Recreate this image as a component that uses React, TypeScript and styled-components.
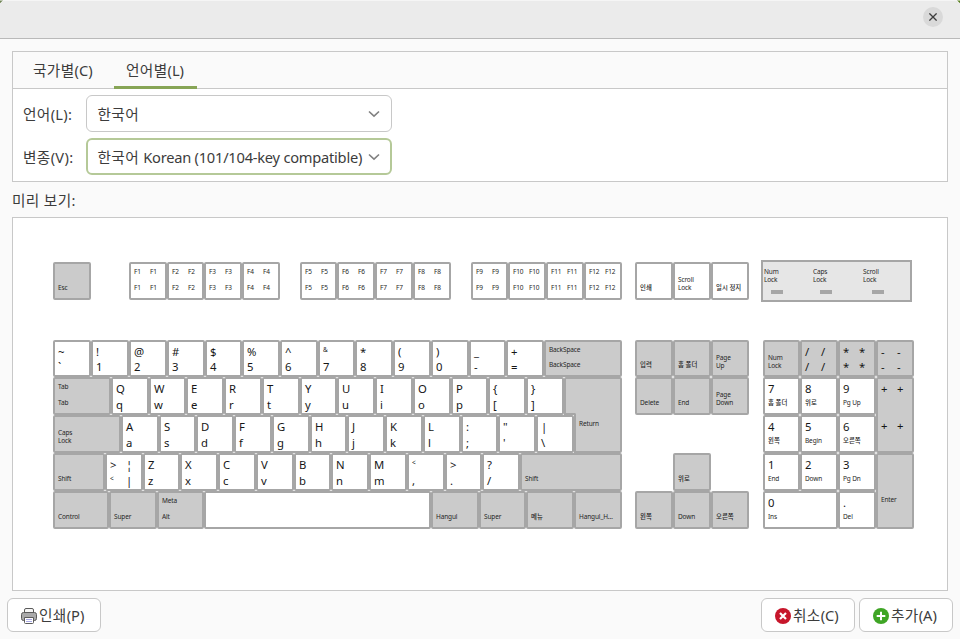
import React from "react";
import styled, { createGlobalStyle, css } from "styled-components";

const GlobalStyle = createGlobalStyle`
  *, *::before { box-sizing: border-box; }
  body {
    margin: 0;
    background: #fafafa;
    color: #3c3c3c;
    font-family: "Noto Sans", "Noto Sans CJK KR", sans-serif;
    font-size: 14.67px;
    letter-spacing: 0.35px;
  }
`;

/* ---------- window ---------- */

const Dialog = styled.div`
  width: 960px;
  height: 639px;
  display: flex;
  flex-direction: column;
  overflow: hidden;
  background: #fafafa;
`;

const TitleBar = styled.header`
  flex: none;
  height: 39px;
  display: flex;
  justify-content: flex-end;
  align-items: flex-start;
  padding: 6px 17px 0 0;
  background: linear-gradient(135deg, #6f8554 2px, transparent 2.5px),
    linear-gradient(225deg, #5a8020 2px, transparent 2.5px), #ebebeb;
  background-origin: border-box;
  border-top: 1px solid rgba(255, 255, 255, 0.5);
  border-bottom: 1px solid #b9b9b9;
`;

const CloseButton = styled.button`
  width: 20px;
  height: 20px;
  padding: 0;
  border: 0;
  border-radius: 50%;
  background: #d9d9d9;
  display: flex;
  align-items: center;
  justify-content: center;
`;

const Body = styled.main`
  flex: 1;
  padding: 12px 12px 0;
  display: flex;
  flex-direction: column;
`;

/* ---------- notebook ---------- */

const Notebook = styled.section`
  flex: none;
  height: 131px;
  border: 1px solid #c8c8c8;
  background: #fff;
`;

const TabBar = styled.nav`
  height: 37px;
  display: flex;
  background: #fafafa;
  border-bottom: 1px solid #c8c8c8;
  padding-left: 8px;
`;

const Tab = styled.div<{ $active?: boolean; $width: number }>`
  width: ${(p) => p.$width}px;
  height: 37px;
  line-height: 37px;
  padding-left: 12px;
  white-space: nowrap;
  border-bottom: 3px solid ${(p) => (p.$active ? "#87a556" : "transparent")};
`;

const Latin = styled.span<{ $spacing?: number }>`
  letter-spacing: ${(p) => p.$spacing ?? 0}px;
`;

const Form = styled.div`
  padding: 6px 10px;
  display: grid;
  grid-template-columns: 63px 306px;
  grid-auto-rows: 37px;
  row-gap: 6px;
  align-items: center;
`;

const FieldLabel = styled.label`
  white-space: nowrap;
`;

const Select = styled.div<{ $focused?: boolean }>`
  height: 37px;
  display: flex;
  align-items: center;
  justify-content: space-between;
  white-space: nowrap;
  background: #fff;
  border-radius: 6px;
  ${(p) =>
    p.$focused
      ? css`
          border: 2px solid #b5c998;
          padding: 0 10px 0 9.5px;
        `
      : css`
          border: 1px solid #c8c8c8;
          padding: 0 11px 0 10.5px;
        `}
`;

const PreviewLabel = styled.div`
  height: 35px;
  line-height: 36px;
`;

/* ---------- keyboard ---------- */

const Preview = styled.section`
  height: 374px;
  border: 1px solid #c8c8c8;
  background: #fff;
  padding: 42px 0 0 40px;
  color: #262626;
  line-height: 12px;
  letter-spacing: 0;
`;

const FunctionRow = styled.div`
  height: 42px;
  display: flex;
  align-items: center;
  margin-bottom: 38px;
`;

const KeyGroup = styled.div<{ $gap: number }>`
  display: flex;
  margin-right: ${(p) => p.$gap}px;
`;

const Blocks = styled.div`
  display: flex;
`;

const Block = styled.div<{ $width: number; $gap: number }>`
  width: ${(p) => p.$width}px;
  margin-right: ${(p) => p.$gap}px;
`;

const KeyRow = styled.div`
  display: flex;
`;

const Cap = styled.div<{ $w: number; $h: number; $dark?: boolean }>`
  flex: none;
  width: ${(p) => p.$w}px;
  height: ${(p) => p.$h}px;
  border: 2px solid #a6a6a6;
  border-radius: 2px;
  background: ${(p) => (p.$dark ? "#cbcbcb" : "#fff")};
  display: grid;
  grid-template-columns: 16px 1fr;
  grid-template-rows: ${(p) => (p.$h > 38 ? 37 : p.$h === 37 ? 15 : 16)}px 1fr;
  padding: 2px 0 0 3px;
  white-space: nowrap;
  overflow: hidden;
`;

const Legend = styled.span<{ $small?: boolean; $korean?: boolean; $lower?: boolean; $wide?: boolean }>`
  ${(p) =>
    p.$small
      ? css`
          font-size: 6.5px;
          line-height: 12px;
          letter-spacing: -0.13px;
        `
      : css`
          font-size: 11.3px;
          line-height: 16px;
          color: #161616;
        `}
  ${(p) => p.$korean && "font-size: 6.4px; font-weight: 500; letter-spacing: 0;"}
  ${(p) => p.$wide && "grid-column: 1 / 3;"}
  ${(p) => p.$lower && "grid-row: 2;"}
`;

const TwoLine = styled.span`
  grid-column: 1 / 3;
  grid-row: 1 / 3;
  padding-top: 10px;
  font-size: 6.5px;
  line-height: 7.6px;
  letter-spacing: -0.13px;
  white-space: pre;
`;

const ReturnArea = styled.div`
  display: grid;
  grid-template-columns: 511px 10px 48px;
  grid-template-rows: 38px 38px;
`;

const UpperLetters = styled(KeyRow)`
  grid-area: 1 / 1 / 2 / 2;
`;

const LowerLetters = styled(KeyRow)`
  grid-area: 2 / 1 / 3 / 3;
  z-index: 1;
`;

/* Return key with its lower left corner notched out */
const ReturnKey = styled.div`
  grid-area: 1 / 2 / 3 / 4;
  position: relative;
  border: 2px solid #a6a6a6;
  border-radius: 2px;
  background: #cbcbcb;
  padding: 39px 0 0 13px;
  font-size: 6.5px;
  letter-spacing: -0.13px;

  &::before {
    content: "";
    position: absolute;
    left: -2px;
    top: 34px;
    width: 12px;
    height: 40px;
    background: #fff;
    border: solid #a6a6a6;
    border-width: 2px 2px 0 0;
    border-top-right-radius: 2px;
  }
`;

const Spacer = styled.div<{ $w?: number; $h?: number }>`
  flex: none;
  width: ${(p) => p.$w ?? 1}px;
  height: ${(p) => p.$h ?? 1}px;
`;

const NumBody = styled.div`
  display: grid;
  grid-template-columns: 113px 38px;
`;

const StatusPanel = styled.div`
  width: 151px;
  height: 42px;
  border: 2px solid #a6a6a6;
  background: #e6e6e6;
  display: grid;
  grid-template-columns: 49px 50px 48px;
  padding: 6px 0 0 1px;
  font-size: 6.5px;
  line-height: 7.6px;
  letter-spacing: -0.13px;
  white-space: pre;
`;

const Led = styled.i<{ $indent: number }>`
  display: block;
  width: 12px;
  height: 4px;
  margin: 6.8px 0 0 ${(p) => p.$indent}px;
  background: #a6a6a6;
`;

/* ---------- actions ---------- */

const Actions = styled.footer`
  flex: none;
  height: 48px;
  padding: 7px 7px 7px 7px;
  display: flex;
  gap: 4px;
`;

const Push = styled.button<{ $end?: boolean }>`
  width: 94px;
  height: 34px;
  padding: 0 0 0 13px;
  margin-left: ${(p) => (p.$end ? "auto" : 0)};
  display: flex;
  align-items: center;
  gap: 2px;
  border: 1px solid #c8c8c8;
  border-radius: 6px;
  background: #fff;
  color: inherit;
  font: inherit;
  letter-spacing: inherit;
  line-height: 20px;
  white-space: nowrap;

  span {
    padding-bottom: 1px;
  }

  svg {
    margin-top: 1px;
  }
`;

const Chevron = () => (
  <svg width="12" height="8" viewBox="0 0 12 8" fill="none" stroke="#808080" strokeWidth="1.6">
    <path d="M1 1.5 6 6.2 11 1.5" />
  </svg>
);

const CloseGlyph = () => (
  <svg width="8" height="8" viewBox="0 0 8 8" stroke="#3c3c3c" strokeWidth="1.3">
    <path d="M.4.4 7.6 7.6M7.6.4.4 7.6" />
  </svg>
);

const PrinterIcon = () => (
  <svg width="16" height="16" viewBox="0 0 16 16" stroke="#5a5a5a">
    <rect x="3.5" y=".5" width="9" height="7" rx="1.5" fill="#f6f6f6" />
    <rect x=".5" y="4.5" width="15" height="8" rx="2" fill="#a9a9a9" />
    <path d="M3.5 9.5h9v5a1 1 0 0 1-1 1h-7a1 1 0 0 1-1-1z" fill="#fff" />
    <path d="M5 11.5h6M5 13.5h6" stroke="#a9a9e6" />
  </svg>
);

const CancelIcon = () => (
  <svg width="16" height="16" viewBox="0 0 16 16">
    <circle cx="8" cy="8" r="8" fill="#c7162b" />
    <path d="M5 5l6 6M11 5l-6 6" stroke="#fff" strokeWidth="2.2" />
  </svg>
);

const AddIcon = () => (
  <svg width="16" height="16" viewBox="0 0 16 16">
    <circle cx="8" cy="8" r="8" fill="#3fa525" />
    <path d="M8 3.7v8.6M3.7 8h8.6" stroke="#fff" strokeWidth="2" />
  </svg>
);

/* ---------- key data ---------- */

type KeyDef = {
  w: number;
  h?: number;
  dark?: boolean;
  two?: string;
  tl?: string;
  tr?: string;
  bl?: string;
  br?: string;
};

const isWord = (t: string) => t.length > 1;
const isKorean = (t: string) => /[가-힣]/.test(t);

/* A legend prefixed with "~~" is a single character set in the small size. */
function Text({ t, lower, wide }: { t?: string; lower?: boolean; wide?: boolean }) {
  if (!t) return lower ? null : <span />;
  const tiny = t.startsWith("~~");
  const label = tiny ? t.slice(2) : t;
  return (
    <Legend $small={tiny || isWord(t)} $korean={isKorean(t)} $lower={lower} $wide={wide}>
      {label}
    </Legend>
  );
}

function Key({ w, h = 38, dark, two, tl, tr, bl, br }: KeyDef) {
  return (
    <Cap $w={w} $h={h} $dark={dark}>
      {two ? (
        <TwoLine>{two}</TwoLine>
      ) : (
        <>
          <Text t={tl} wide={!tr} />
          {tr && <Text t={tr} />}
          <Text t={bl} lower wide={!br} />
          {br && <Text t={br} lower />}
        </>
      )}
    </Cap>
  );
}

const Keys = ({ list, h }: { list: KeyDef[]; h?: number }) => (
  <>
    {list.map((k, i) => (
      <Key key={i} h={h} {...k} />
    ))}
  </>
);

const pairs = (text: string, widths: number[]): KeyDef[] =>
  text.split(" ").map((p, i) => ({ w: widths[i], tl: p[0], bl: p[1] }));

const fkeys = (first: number, widths: number[]): KeyDef[] =>
  widths.map((w, i) => {
    const t = `F${first + i}`;
    return { w, tl: t, tr: t, bl: t, br: t };
  });

const digits: KeyDef[] = [
  ...pairs("~` !1 @2 #3 $4 %5 ^6", [38, 38, 38, 38, 37, 38, 38]),
  { w: 37, tl: "~~&", bl: "7" },
  ...pairs("*8 (9 )0 _- +=", [38, 38, 38, 37, 38]),
  { w: 78, dark: true, tl: "BackSpace", bl: "BackSpace" },
];

const upper: KeyDef[] = [
  { w: 58, dark: true, tl: "Tab", bl: "Tab" },
  ...pairs("Qq Ww Ee Rr Tt Yy Uu Ii Oo Pp {[ }]", [38, 37, 38, 38, 38, 37, 38, 38, 38, 37, 38, 38]),
];

const home: KeyDef[] = [
  { w: 68, dark: true, two: "Caps\nLock" },
  ...pairs("Aa Ss Dd Ff Gg Hh Jj Kk Ll :; \"' |\\", [38, 37, 38, 38, 38, 37, 38, 38, 38, 37, 38, 38]),
];

const lower: KeyDef[] = [
  { w: 52, dark: true, bl: "Shift" },
  { w: 38, tl: ">", tr: "¦", bl: "~~<", br: "|" },
  ...pairs("Zz Xx Cc Vv Bb Nn Mm", [37, 38, 38, 38, 37, 38, 38]),
  { w: 38, tl: "~~<", bl: "," },
  ...pairs(">. ?/", [37, 38]),
  { w: 102, dark: true, bl: "Shift" },
];

const bottom: KeyDef[] = [
  { w: 56, dark: true, bl: "Control" },
  { w: 48, dark: true, bl: "Super" },
  { w: 47, dark: true, tl: "Meta", bl: "Alt" },
  { w: 227 },
  { w: 48, dark: true, bl: "Hangul" },
  { w: 47, dark: true, bl: "Super" },
  { w: 48, dark: true, bl: "메뉴" },
  { w: 48, dark: true, bl: "Hangul_H…" },
];

const quad = (t: string, w: number, h?: number): KeyDef => ({ w, h, dark: true, tl: t, tr: t, bl: t, br: t });

export default function App() {
  return (
    <>
      <GlobalStyle />
      <Dialog>
        <TitleBar>
          <CloseButton aria-label="닫기">
            <CloseGlyph />
          </CloseButton>
        </TitleBar>
        <Body>
          <Notebook>
            <TabBar>
              <Tab $width={93}>국가별<Latin>(C)</Latin></Tab>
              <Tab $width={83} $active>언어별<Latin>(L)</Latin></Tab>
            </TabBar>
            <Form>
              <FieldLabel>언어<Latin $spacing={0.3}>(L):</Latin></FieldLabel>
              <Select>
                <span>한국어</span>
                <Chevron />
              </Select>
              <FieldLabel>변종<Latin $spacing={0.3}>(V):</Latin></FieldLabel>
              <Select $focused>
                <span>
                  한국어 <Latin $spacing={-0.24}>Korean (101/104-key compatible)</Latin>
                </span>
                <Chevron />
              </Select>
            </Form>
          </Notebook>
          <PreviewLabel>미리 보기:</PreviewLabel>
          <Preview>
            <FunctionRow>
              <KeyGroup $gap={38}><Key w={38} dark bl="Esc" /></KeyGroup>
              <KeyGroup $gap={20}><Keys list={fkeys(1, [38, 37, 38, 38])} /></KeyGroup>
              <KeyGroup $gap={20}><Keys list={fkeys(5, [37, 38, 38, 38])} /></KeyGroup>
              <KeyGroup $gap={13}><Keys list={fkeys(9, [37, 38, 38, 38])} /></KeyGroup>
              <KeyGroup $gap={12}>
                <Key w={38} bl="인쇄" />
                <Key w={38} two={"Scroll\nLock"} />
                <Key w={38} bl="일시 정지" />
              </KeyGroup>
              <StatusPanel>
                <div>{"Num\nLock"}<Led $indent={7} /></div>
                <div>{"Caps\nLock"}<Led $indent={7} /></div>
                <div>{"Scroll\nLock"}<Led $indent={9} /></div>
              </StatusPanel>
            </FunctionRow>
            <Blocks>
              <Block $width={569} $gap={13}>
                <KeyRow><Keys list={digits} h={37} /></KeyRow>
                <ReturnArea>
                  <UpperLetters><Keys list={upper} /></UpperLetters>
                  <LowerLetters><Keys list={home} /></LowerLetters>
                  <ReturnKey>Return</ReturnKey>
                </ReturnArea>
                <KeyRow><Keys list={lower} /></KeyRow>
                <KeyRow><Keys list={bottom} /></KeyRow>
              </Block>
              <Block $width={114} $gap={14}>
                <KeyRow>
                  <Key w={38} h={37} dark bl="입력" />
                  <Key w={38} h={37} dark bl="홈 폴더" />
                  <Key w={38} h={37} dark two={"Page\nUp"} />
                </KeyRow>
                <KeyRow>
                  <Key w={38} dark bl="Delete" />
                  <Key w={38} dark bl="End" />
                  <Key w={38} dark two={"Page\nDown"} />
                </KeyRow>
                <Spacer $h={38} />
                <KeyRow>
                  <Spacer $w={38} />
                  <Key w={38} dark bl="위로" />
                </KeyRow>
                <KeyRow>
                  <Key w={38} dark bl="왼쪽" />
                  <Key w={38} dark bl="Down" />
                  <Key w={38} dark bl="오른쪽" />
                </KeyRow>
              </Block>
              <Block $width={151} $gap={0}>
                <KeyRow>
                  <Key w={37} h={37} dark two={"Num\nLock"} />
                  <Keys list={[quad("/", 38, 37), quad("*", 38, 37), quad("-", 38, 37)]} />
                </KeyRow>
                <NumBody>
                  <div>
                    <KeyRow>
                      <Key w={37} tl="7" bl="홈 폴더" />
                      <Key w={38} tl="8" bl="위로" />
                      <Key w={38} tl="9" bl="Pg Up" />
                    </KeyRow>
                    <KeyRow>
                      <Key w={37} tl="4" bl="왼쪽" />
                      <Key w={38} tl="5" bl="Begin" />
                      <Key w={38} tl="6" bl="오른쪽" />
                    </KeyRow>
                    <KeyRow>
                      <Key w={37} tl="1" bl="End" />
                      <Key w={38} tl="2" bl="Down" />
                      <Key w={38} tl="3" bl="Pg Dn" />
                    </KeyRow>
                    <KeyRow>
                      <Key w={75} tl="0" bl="Ins" />
                      <Key w={38} tl="." bl="Del" />
                    </KeyRow>
                  </div>
                  <div>
                    <Key {...quad("+", 38, 76)} />
                    <Key w={38} h={76} dark bl="Enter" />
                  </div>
                </NumBody>
              </Block>
            </Blocks>
          </Preview>
        </Body>
        <Actions>
          <Push><PrinterIcon /><span>인쇄<Latin>(P)</Latin></span></Push>
          <Push $end><CancelIcon /><span>취소<Latin>(C)</Latin></span></Push>
          <Push><AddIcon /><span>추가<Latin>(A)</Latin></span></Push>
        </Actions>
      </Dialog>
    </>
  );
}
